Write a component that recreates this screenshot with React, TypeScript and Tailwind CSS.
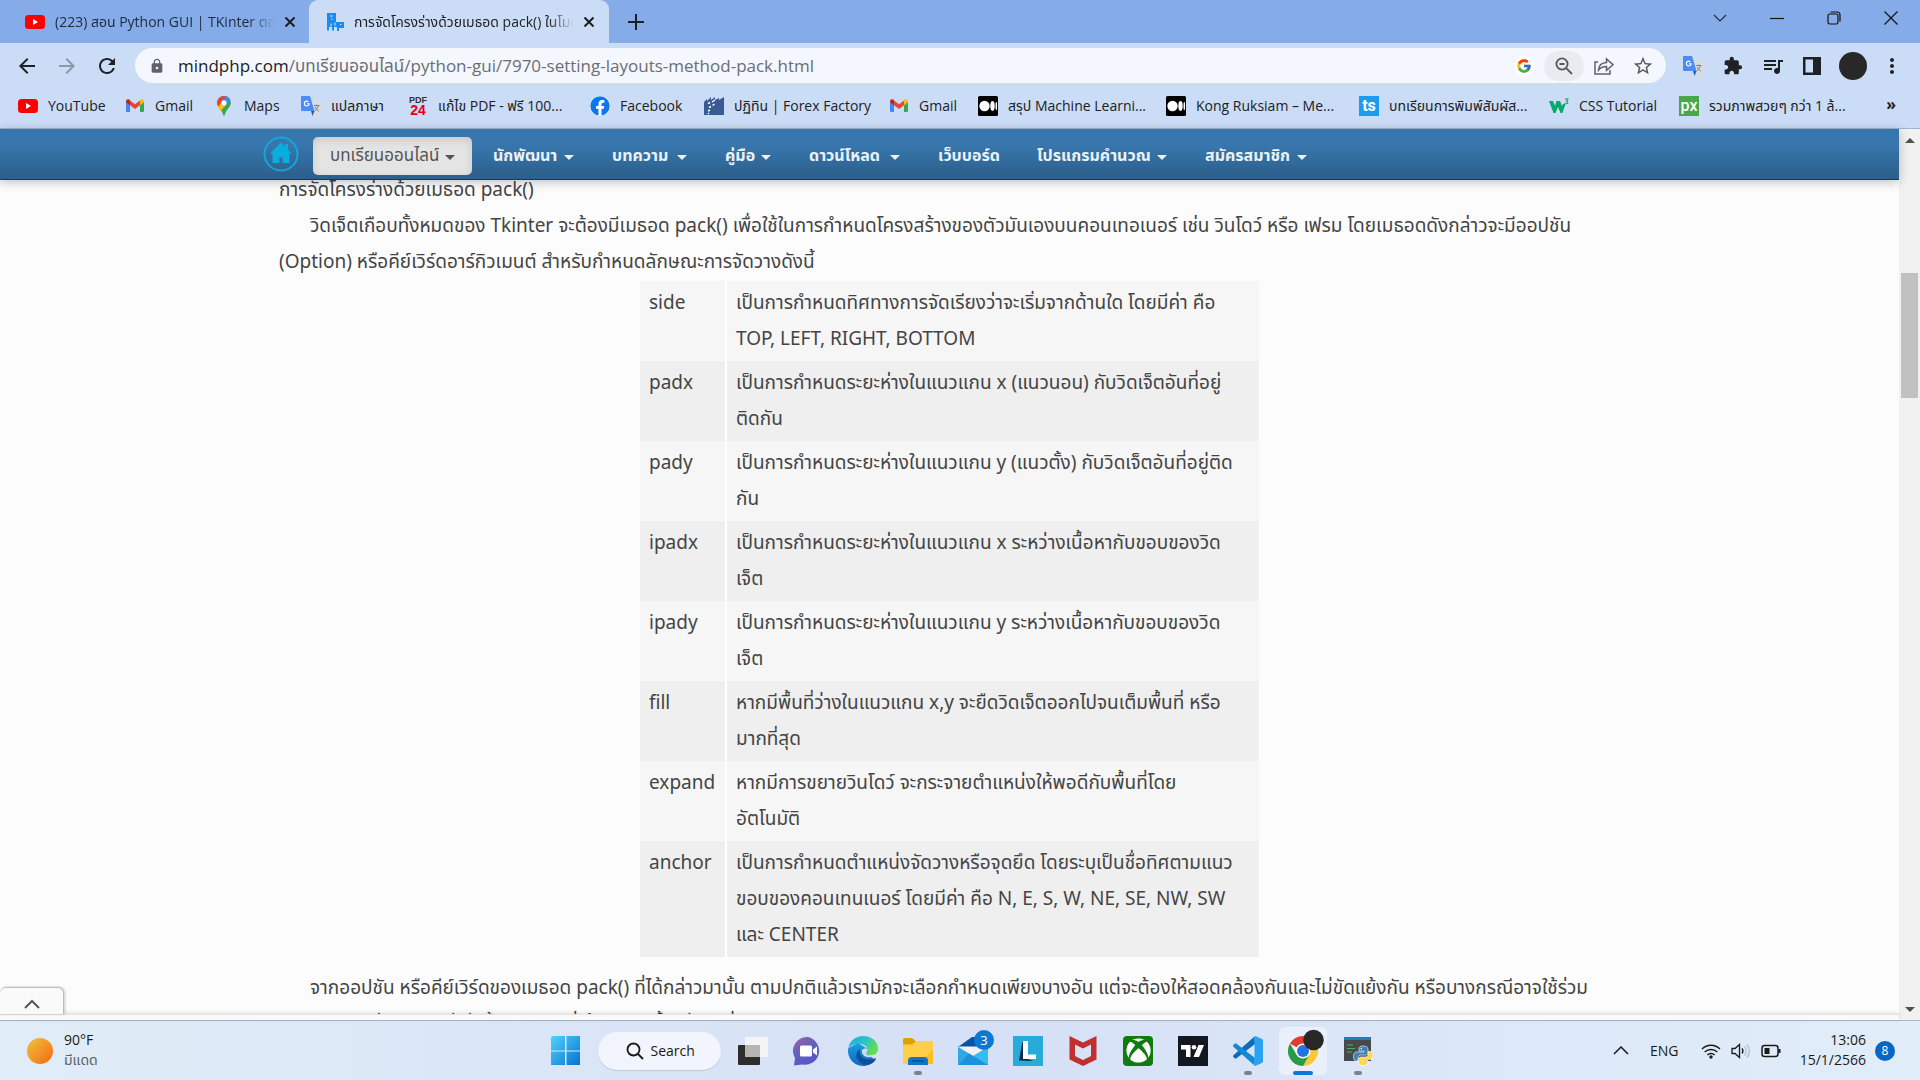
import type { ReactNode } from "react";
import {
  MdArrowBack,
  MdArrowForward,
  MdExtension,
  MdLock,
  MdMoreVert,
  MdQueueMusic,
  MdRefresh,
  MdStarBorder,
} from "react-icons/md";
import { FcGoogle } from "react-icons/fc";
import { FaFacebook, FaXbox } from "react-icons/fa";

const uiFont = "font-['Open_Sans','Noto_Sans_Thai','Loma',sans-serif]";
const pageFont = "font-['Noto_Sans','Noto_Sans_Thai','Loma',sans-serif]";

/* ---------- small brand icons ---------- */

function YouTubeIcon() {
  return (
    <svg viewBox="0 0 20 20" className="size-5 shrink-0">
      <rect x="0" y="3" width="20" height="14" rx="3.5" fill="#f00" />
      <path d="M8 7l5 3-5 3z" fill="#fff" />
    </svg>
  );
}

function GmailIcon() {
  return (
    <svg viewBox="0 0 20 20" className="size-5 shrink-0">
      <path d="M1 5.5v9.3c0 .8.5 1.2 1.2 1.2H5V8.8z" fill="#4285f4" />
      <path d="M19 5.5v9.3c0 .8-.5 1.2-1.2 1.2H15V8.8z" fill="#34a853" />
      <path d="M15 4.600v4.600l4-3v-.9c0-2-2-2.700-3.300-1.700z" fill="#fbbc04" />
      <path d="M1 5.300v.9l4 3V4.600L4.300 3.600C3 2.600 1 3.300 1 5.300z" fill="#c5221f" />
      <path d="M5 9.200V4.500l5 3.800 5-3.800v4.700l-5 3.800z" fill="#ea4335" />
    </svg>
  );
}

function MapsIcon() {
  return (
    <svg viewBox="0 0 20 20" className="size-5 shrink-0">
      <path d="M10 0C6 0 3.200 3 3.200 6.800c0 4.700 4.800 6.700 5.700 11.500.3 1.900 1.900 1.900 2.200 0 .9-4.800 5.700-6.800 5.700-11.500C16.800 3 14 0 10 0z" fill="#34a853" />
      <path d="M3.200 6.800C3.200 3 6 0 10 0c1 0 1.900.2 2.700.5L4.200 10.500c-.6-1.100-1-2.300-1-3.700z" fill="#ea4335" />
      <path d="M10 0c3 0 5.300 1.600 6.300 4l-4.200 4.900L7.800 5.100l4.100-4.900z" fill="#4285f4" />
      <path d="M4.200 10.500l3.600-4.300 4.400 2.600-5.500 6.300c-1-1.400-1.900-2.800-2.500-4.600z" fill="#fbbc04" />
      <circle cx="10" cy="6.800" r="2.600" fill="#fff" />
    </svg>
  );
}

function TranslateIcon() {
  return (
    <svg viewBox="0 0 20 20" className="size-5 shrink-0">
      <path d="M8 5h11c.6 0 1 .4 1 1v13c0 .6-.4 1-1 1h-7z" fill="#dadce0" />
      <path d="M1 0h8l4.500 15H1c-.6 0-1-.4-1-1V1c0-.6.4-1 1-1z" fill="#4c8bf5" />
      <path d="M10 15h3.500L11.500 20z" fill="#2a56c6" />
      <path d="M8.600 7.200H5.900v1.100h1.500c-.2.8-.8 1.200-1.600 1.200a1.900 1.900 0 010-3.800c.5 0 .9.200 1.200.5l.8-.8a2.900 2.900 0 00-2-.8 3 3 0 100 6c1.700 0 2.900-1.200 2.900-3z" fill="#fff" />
      <path d="M13 9.500h5.500M15.700 8.500v1M17.300 9.500c-.4 2.400-1.800 4.200-3.800 5.500M14.200 11c.8 1.900 2 3.200 3.800 4.300" stroke="#7a828c" strokeWidth="1" fill="none" />
    </svg>
  );
}

function Pdf24Icon() {
  return (
    <span className="flex h-5 w-5 shrink-0 flex-col items-center justify-center font-['Liberation_Sans',sans-serif] font-bold">
      <span className="text-[9px] leading-[9px] text-[#333]">PDF</span>
      <span className="text-[14px] leading-[11px] text-[#e2001a]">24</span>
    </span>
  );
}

function FacebookIcon() {
  return <FaFacebook className="size-5 shrink-0 rounded-full bg-white text-[#0b76f0]" />;
}

function ForexIcon() {
  return (
    <svg viewBox="0 0 20 20" className="size-5 shrink-0">
      <path d="M0 19V6l3-3v2l4-4v3l4-3v3l4-2v2l5-3v18z" fill="#3a5a94" />
      <path d="M4 7.500l2-1M8 6l3-2M5 11.500l2-1M8.500 9.500l2-1.500M4 15l2-1M4 18l1-1" stroke="#fff" strokeWidth="1.500" fill="none" />
    </svg>
  );
}

function MediumIcon() {
  return (
    <svg viewBox="0 0 20 20" className="size-5 shrink-0">
      <rect width="20" height="20" rx="1.500" fill="#000" />
      <ellipse cx="6.500" cy="10" rx="5.200" ry="5.200" fill="#fff" />
      <ellipse cx="14.500" cy="10" rx="2.200" ry="4.900" fill="#fff" />
      <ellipse cx="18.300" cy="10" rx=".8" ry="4.300" fill="#fff" />
    </svg>
  );
}

function TsIcon() {
  return (
    <span className="flex size-5 shrink-0 items-center justify-center bg-[#1d9bf0] font-['Roboto',sans-serif] text-base leading-5 font-bold text-white">
      ts
    </span>
  );
}

function PxIcon() {
  return (
    <span className="flex size-5 shrink-0 items-center justify-center bg-[#48a748] font-['Roboto',sans-serif] text-base leading-5 font-medium text-white">
      px
    </span>
  );
}

function W3Icon() {
  return (
    <svg viewBox="0 0 20 20" className="size-5 shrink-0">
      <path d="M0 5h4l2 5 1.500-5h3.500l2 5 1-2h2.500L13.500 17h-2L9 11l-2.500 6h-2z" fill="#04aa6d" />
      <path d="M16 3h3l-1.500 2c1.500 0 2 2.500-.2 2.800-.7 0-1.300-.3-1.600-.8" stroke="#04aa6d" strokeWidth="1.100" fill="none" />
    </svg>
  );
}

function MindphpIcon() {
  return (
    <svg viewBox="0 0 18 18" className="size-[18px] shrink-0">
      <path d="M1 0h9v9h8v6h-5v3h-2v-4H8v3.500H6V14H3v3.500H1z" fill="#1a8cf0" />
      <path d="M4 3h3M5 6h1.500M14 11.500h1.500M5 10.500v3M9 9.500v3" stroke="#cbdcf6" strokeWidth="1.100" />
    </svg>
  );
}

/* ---------- browser chrome ---------- */

function CloseX() {
  return (
    <svg viewBox="0 0 12 12" className="size-3" fill="none" stroke="#1c1f23" strokeWidth="2">
      <path d="M1.500 1.500l9 9M10.500 1.500l-9 9" />
    </svg>
  );
}

function TabStrip() {
  return (
    <div className="flex h-[43px] shrink-0 items-stretch bg-[#85ace9] text-[15px] text-[#1c2a40]">
      <div className="flex w-[309px] items-center pl-[25px]">
        <YouTubeIcon />
        <span className="ml-2.5 w-[220px] overflow-hidden [mask-image:linear-gradient(to_right,#000_88%,transparent)] text-sm leading-6 whitespace-nowrap">
          (223) สอน Python GUI | TKinter ตอนที่
        </span>
        <button aria-label="Close tab" className="ml-[9px]"><CloseX /></button>
      </div>
      <div className="flex w-[300px] items-center rounded-t-[9px] bg-[#cbdcf6] pl-[17px] text-[#1c1f23]">
        <MindphpIcon />
        <span className="ml-2.5 w-[220px] overflow-hidden [mask-image:linear-gradient(to_right,#000_88%,transparent)] text-sm leading-6 whitespace-nowrap">
          การจัดโครงร่างด้วยเมธอด pack() ในโมดูล
        </span>
        <button aria-label="Close tab" className="ml-[9px]"><CloseX /></button>
      </div>
      <button aria-label="New tab" className="ml-[19px]">
        <svg viewBox="0 0 16 16" className="size-4" stroke="#1c1f23" strokeWidth="2"><path d="M8 0v16M0 8h16" /></svg>
      </button>
      <div className="ml-auto flex h-9 items-center pr-px">
        <button aria-label="Search tabs" className="flex w-[57px] justify-center">
          <svg viewBox="0 0 14 8" className="w-3.5" fill="none" stroke="#1c2a40" strokeWidth="1.100"><path d="M1 1l6 6 6-6" /></svg>
        </button>
        <button aria-label="Minimize" className="flex w-[57px] justify-center">
          <svg viewBox="0 0 14 14" className="w-3.5" stroke="#111" strokeWidth="1.200"><path d="M0 7.500h14" /></svg>
        </button>
        <button aria-label="Restore" className="flex w-[57px] justify-center">
          <svg viewBox="0 0 14 14" className="w-3.5" fill="none" stroke="#111" strokeWidth="1.200">
            <rect x="1" y="3" width="10" height="10" rx="1.800" />
            <path d="M3.500 1h6.500a3 3 0 013 3v6.500" />
          </svg>
        </button>
        <button aria-label="Close" className="flex w-[57px] justify-center">
          <svg viewBox="0 0 14 14" className="w-3.5" fill="none" stroke="#111" strokeWidth="1.200"><path d="M.5.500l13 13M13.500.500l-13 13" /></svg>
        </button>
      </div>
    </div>
  );
}

function Toolbar() {
  return (
    <div className="flex h-[45px] shrink-0 items-center bg-[#cbdcf6] pr-4 text-[#202124]">
      <button aria-label="Back" className="ml-[15px]"><MdArrowBack className="size-6" /></button>
      <button aria-label="Forward" className="ml-4 text-[#8b96a9]"><MdArrowForward className="size-6" /></button>
      <button aria-label="Reload" className="ml-4"><MdRefresh className="size-6" /></button>
      <div className="ml-4 flex h-[35px] flex-1 items-center rounded-full bg-[#f4f7fd] pr-3 pl-3.5">
        <MdLock className="size-4 shrink-0 text-[#5f6368]" />
        <div className="relative ml-[13px] flex-1 text-[17px] leading-7">
          <input aria-label="Address" readOnly value="" className="absolute inset-0 w-full bg-transparent outline-none" />
          <span className="pointer-events-none whitespace-nowrap text-[#202124]">
            mindphp.com<span className="text-[#6a6e74]">/บทเรียนออนไลน์/python-gui/7970-setting-layouts-method-pack.html</span>
          </span>
        </div>
        <span className="flex size-5 items-center justify-center rounded-full bg-white"><FcGoogle className="size-4" /></span>
        <button aria-label="Zoom" className="ml-2.5 flex h-[30px] w-10 items-center justify-center rounded-full bg-[#e8ebf0]">
          <svg viewBox="0 0 18 18" className="size-[18px]" fill="none" stroke="#54585d" strokeWidth="1.800">
            <circle cx="7" cy="7" r="5.600" /><path d="M11.200 11.200l5.800 5.800M4.500 7h5" />
          </svg>
        </button>
        <button aria-label="Share" className="ml-2.5">
          <svg viewBox="0 0 20 18" className="h-[18px] w-5" fill="none" stroke="#5f6368" strokeWidth="1.500">
            <path d="M4 5H1v12h15v-4M4.500 13c.3-4.500 3-7.200 8-7.400V2l6.500 5.700-6.500 5.600V9.600c-3.500 0-6 1-8 3.400z" />
          </svg>
        </button>
        <button aria-label="Bookmark" className="ml-[18px]"><MdStarBorder className="size-[22px] text-[#54585d]" /></button>
      </div>
      <button aria-label="Google Translate" className="ml-[17px]"><TranslateIcon /></button>
      <button aria-label="Extensions" className="ml-5"><MdExtension className="size-5" /></button>
      <button aria-label="Media" className="ml-[18px]"><MdQueueMusic className="size-6" /></button>
      <button aria-label="Side panel" className="ml-[18px]">
        <svg viewBox="0 0 18 18" className="size-[18px]"><path d="M0 0h18v18H0zM2.500 2.500v13h7.500v-13z" fill="#202124" fillRule="evenodd" /></svg>
      </button>
      <button aria-label="Profile" className="ml-[18px] size-7 rounded-full bg-[#282828]" />
      <button aria-label="Menu" className="ml-[13px]"><MdMoreVert className="size-6" /></button>
    </div>
  );
}

const bookmarks: { label: string; icon: ReactNode; width: string }[] = [
  { label: "YouTube", icon: <YouTubeIcon />, width: "w-[107px]" },
  { label: "Gmail", icon: <GmailIcon />, width: "w-[89px]" },
  { label: "Maps", icon: <MapsIcon />, width: "w-[87px]" },
  { label: "แปลภาษา", icon: <TranslateIcon />, width: "w-[107px]" },
  { label: "แก้ไข PDF - ฟรี 100...", icon: <Pdf24Icon />, width: "w-[182px]" },
  { label: "Facebook", icon: <FacebookIcon />, width: "w-[114px]" },
  { label: "ปฏิทิน | Forex Factory", icon: <ForexIcon />, width: "w-[185px]" },
  { label: "Gmail", icon: <GmailIcon />, width: "w-[89px]" },
  { label: "สรุป Machine Learni...", icon: <MediumIcon />, width: "w-[188px]" },
  { label: "Kong Ruksiam – Me...", icon: <MediumIcon />, width: "w-[193px]" },
  { label: "บทเรียนการพิมพ์สัมผัส...", icon: <TsIcon />, width: "w-[190px]" },
  { label: "CSS Tutorial", icon: <W3Icon />, width: "w-[130px]" },
  { label: "รวมภาพสวยๆ กว่า 1 ล้...", icon: <PxIcon />, width: "w-[190px]" },
];

function BookmarksBar() {
  return (
    <nav aria-label="Bookmarks" className="flex h-[41px] shrink-0 items-center border-b border-[#9fb3d3] bg-[#cbdcf6] pb-1 pl-[18px] text-sm text-[#202124]">
      {bookmarks.map((b, i) => (
        <a key={i} href="#" className={`flex items-center gap-2.5 whitespace-nowrap ${b.width}`}>
          {b.icon}
          <span>{b.label}</span>
        </a>
      ))}
      <button aria-label="More bookmarks" className="mr-6 mb-1 ml-auto text-base leading-5 font-bold">»</button>
    </nav>
  );
}

/* ---------- web page ---------- */

const menu = [
  { label: "บทเรียนออนไลน์", caret: true, width: "w-[159px]" },
  { label: "นักพัฒนา", caret: true, width: "w-[115px]" },
  { label: "บทความ", caret: true, width: "w-[109px]" },
  { label: "คู่มือ", caret: true, width: "w-20" },
  { label: "ดาวน์โหลด", caret: true, width: "w-[125px]" },
  { label: "เว็บบอร์ด", caret: false, width: "w-[95px]" },
  { label: "โปรแกรมคำนวณ", caret: true, width: "w-[164px]" },
  { label: "สมัครสมาชิก", caret: true, width: "w-[136px]" },
];

function SiteNav() {
  return (
    <nav aria-label="Site" className="relative z-10 flex h-[51px] shrink-0 justify-center border-b border-[#16395c] bg-linear-to-b from-[#3877ae] from-30% to-[#2b5e8a] shadow-[0_2px_10px_rgba(0,0,0,0.25)]">
      <div className="flex w-full max-w-[1373px] items-center">
        <a href="#" aria-label="Home" className="flex size-9 items-center justify-center">
          <svg viewBox="0 0 36 36" className="size-9">
            <circle cx="18" cy="18" r="16.500" fill="none" stroke="#0fa9d8" strokeWidth="2" />
            <path d="M18 6.500L7 17.500h2.500V27h6v-6.500h5V27h6v-9.500H29l-4-4V8h-3v2.500z" fill="#0aaede" />
            <path d="M16 27v-6h4v6" fill="none" stroke="#0aaede" strokeWidth="1" />
          </svg>
        </a>
        <ul className="mt-1 ml-3.5 flex items-center gap-1">
          {menu.map((m, i) => (
            <li key={m.label}>
              <a
                href="#"
                className={`flex h-[38px] items-center justify-between px-[17px] pb-0.5 whitespace-nowrap ${m.width} ${
                  i === 0
                    ? "rounded-[5px] bg-[#e4e4e4] text-[17px] text-[#555] shadow-[inset_0_3px_8px_rgba(0,0,0,0.12)]"
                    : "text-base font-bold text-[#eaf2f9]"
                }`}
              >
                {m.label}
                {m.caret && <svg viewBox="0 0 10 5" className="mt-1 w-2.5 shrink-0" fill="currentColor"><path d="M0 0h10L5 5z" /></svg>}
              </a>
            </li>
          ))}
        </ul>
      </div>
    </nav>
  );
}

const options: [string, string[]][] = [
  ["side", ["เป็นการกำหนดทิศทางการจัดเรียงว่าจะเริ่มจากด้านใด โดยมีค่า คือ", "TOP, LEFT, RIGHT, BOTTOM"]],
  ["padx", ["เป็นการกำหนดระยะห่างในแนวแกน x (แนวนอน) กับวิดเจ็ตอันที่อยู่", "ติดกัน"]],
  ["pady", ["เป็นการกำหนดระยะห่างในแนวแกน y (แนวตั้ง) กับวิดเจ็ตอันที่อยู่ติด", "กัน"]],
  ["ipadx", ["เป็นการกำหนดระยะห่างในแนวแกน x ระหว่างเนื้อหากับขอบของวิด", "เจ็ต"]],
  ["ipady", ["เป็นการกำหนดระยะห่างในแนวแกน y ระหว่างเนื้อหากับขอบของวิด", "เจ็ต"]],
  ["fill", ["หากมีพื้นที่ว่างในแนวแกน x,y จะยืดวิดเจ็ตออกไปจนเต็มพื้นที่ หรือ", "มากที่สุด"]],
  ["expand", ["หากมีการขยายวินโดว์ จะกระจายตำแหน่งให้พอดีกับพื้นที่โดย", "อัตโนมัติ"]],
  ["anchor", ["เป็นการกำหนดตำแหน่งจัดวางหรือจุดยึด โดยระบุเป็นชื่อทิศตามแนว", "ขอบของคอนเทนเนอร์ โดยมีค่า คือ N, E, S, W, NE, SE, NW, SW", "และ CENTER"]],
];

function Lines({ lines }: { lines: string[] }) {
  return (
    <>
      {lines.map((l, i) => (
        <span key={i} className="block">{l}</span>
      ))}
    </>
  );
}

function Article() {
  return (
    <main className="min-h-0 flex-1 overflow-hidden">
      <div className="mx-auto -mt-[9px] max-w-[1341px] text-[19px] leading-9 whitespace-nowrap text-[#444]">
        <p>การจัดโครงร่างด้วยเมธอด pack()</p>
        <p className="indent-[31px]">วิดเจ็ตเกือบทั้งหมดของ Tkinter จะต้องมีเมธอด pack() เพื่อใช้ในการกำหนดโครงสร้างของตัวมันเองบนคอนเทอเนอร์ เช่น วินโดว์ หรือ เฟรม โดยเมธอดดังกล่าวจะมีออปชัน</p>
        <p>(Option) หรือคีย์เวิร์ดอาร์กิวเมนต์ สำหรับกำหนดลักษณะการจัดวางดังนี้</p>
        <table className="mx-auto mt-0.5 mb-3 w-[619px] table-fixed">
          <colgroup><col className="w-[86px]" /><col /></colgroup>
          <tbody>
            {options.map(([name, lines], i) => (
              <tr key={name} className={i % 2 ? "bg-[#efefef]" : "bg-[#f6f6f6]"}>
                <th scope="row" className="border-r-2 border-white px-[9px] pt-[3px] pb-[5px] text-left align-top font-normal">{name}</th>
                <td className="px-[9px] pt-[3px] pb-[5px] align-top"><Lines lines={lines} /></td>
              </tr>
            ))}
          </tbody>
        </table>
        <p className="indent-[31px]">จากออปชัน หรือคีย์เวิร์ดของเมธอด pack() ที่ได้กล่าวมานั้น ตามปกติแล้วเรามักจะเลือกกำหนดเพียงบางอัน แต่จะต้องให้สอดคล้องกันและไม่ขัดแย้งกัน หรือบางกรณีอาจใช้ร่วม</p>
        <p>กันโดยเป็นอย่างตัวละไม่เท่านั้น ผลลัพธ์ที่ได้อาจเกิดขึ้นไม่ตรงที่คาดหวัง</p>
      </div>
    </main>
  );
}

function Scrollbar() {
  return (
    <div className="flex w-[21px] shrink-0 flex-col items-center bg-[#f1f1f1] pt-[9px] pb-2">
      <svg viewBox="0 0 10 5" className="w-2.5 fill-[#505050]"><path d="M0 5h10L5 0z" /></svg>
      <div className="mt-[130px] h-[125px] w-[17px] bg-[#c1c1c1]" />
      <svg viewBox="0 0 10 5" className="mt-auto w-2.5 fill-[#505050]"><path d="M0 0h10L5 5z" /></svg>
    </div>
  );
}

function WebPage() {
  return (
    <div className="flex min-h-0 flex-1">
      <div className={`relative flex min-w-0 flex-1 flex-col bg-[#fcfcfc] ${pageFont}`}>
        <SiteNav />
        <Article />
        <div className="h-1.5 shrink-0 border-t border-[#e2e2e2] bg-[#fafafa] shadow-[0_-1px_4px_rgba(0,0,0,0.12)]" />
        <button aria-label="Back to top" className="absolute bottom-1.5 left-0 flex h-[27px] w-16 items-center justify-center rounded-t-md border-t border-r border-[#bbb] bg-[#fafafa] pt-1.5 shadow-[1px_0_3px_rgba(0,0,0,0.2)]">
          <svg viewBox="0 0 16 10" className="w-4" fill="none" stroke="#555" strokeWidth="2"><path d="M1 9l7-7 7 7" /></svg>
        </button>
      </div>
      <Scrollbar />
    </div>
  );
}

/* ---------- taskbar ---------- */

function WindowsIcon() {
  return (
    <svg viewBox="0 0 30 30" className="size-[30px]">
      <defs><linearGradient id="win" x1="0" y1="0" x2="1" y2="1"><stop offset="0" stopColor="#4fd3ff" /><stop offset="1" stopColor="#0673d0" /></linearGradient></defs>
      <path d="M1.500 0H14v14.500H0v-13zM15.500 0H29v14.500H15.500zM0 15.500h14V29H0zM15.500 15.500H29V29H15.500z" fill="url(#win)" />
    </svg>
  );
}

function TaskViewIcon() {
  return (
    <svg viewBox="0 0 30 30" className="size-[30px]">
      <rect x="0" y="9" width="22" height="20" rx="1" fill="#2d2d2d" />
      <rect x="7" y="1" width="23" height="20" rx="1" fill="#f4f4f4" />
      <rect x="7" y="9" width="15" height="12" fill="#b5b5b5" />
    </svg>
  );
}

function ChatIcon() {
  return (
    <svg viewBox="0 0 30 30" className="size-[30px]">
      <defs>
        <linearGradient id="chat" x1="0" y1="0" x2=".6" y2="1"><stop offset="0" stopColor="#a0609f" /><stop offset=".5" stopColor="#6560bd" /><stop offset="1" stopColor="#5058c8" /></linearGradient>
      </defs>
      <path d="M15 1a14 14 0 11-6 27.500L1 29.500l1-7.500A14 14 0 0115 1z" fill="url(#chat)" />
      <rect x="7" y="9.500" width="12" height="11" rx="1.500" fill="#fff" />
      <path d="M20 13.500l4-3v9l-4-3z" fill="#fff" />
    </svg>
  );
}

function EdgeIcon() {
  return (
    <svg viewBox="0 0 30 30" className="size-[30px]">
      <defs>
        <linearGradient id="edgeTop" x1="0" y1="0" x2="1" y2=".5"><stop offset="0" stopColor="#20a8e0" /><stop offset=".55" stopColor="#2cc3c9" /><stop offset="1" stopColor="#67dd4a" /></linearGradient>
        <linearGradient id="edgeLow" x1="0" y1="0" x2="0" y2="1"><stop offset="0" stopColor="#1b9de2" /><stop offset="1" stopColor="#1068c4" /></linearGradient>
      </defs>
      <path d="M.3 12A15 15 0 0015 30c5 0 9.500-2.500 12.500-6L18 17.500l1-5L10 7z" fill="url(#edgeLow)" />
      <path d="M.3 12C1.500 5 7.500 0 15 0c9 0 15 6 15 12.500 0 4.500-3.500 7-7.500 7-3 0-4.500-1-4.500-2s1.300-1.500 1.300-4c0-3-3.300-5.500-7.800-5.500C6 8 1.500 10 .3 12z" fill="url(#edgeTop)" />
      <path d="M12 13c-3 2-5 6-2.500 10.500 3 5 9 6.500 13 4.500 2-1 4-2.500 5.200-4.600.4-.8-.3-1.300-1-.9-5.500 2.800-13.700 0-14.900-5-.3-1.700-.2-3.200.2-4.500z" fill="#0e4f97" />
      <path d="M14 14c1.500-2 5.300-2 5.300-.5 0 2.500-1.300 3-1.300 4s1.500 2 4.500 2c1.500 0 3-.3 4-.9-3 4.400-13.500 3.400-12.500-4.600z" fill="#d5def4" />
    </svg>
  );
}

function FolderIcon() {
  return (
    <svg viewBox="0 0 30 30" className="size-[30px]">
      <path d="M0 4c0-1 .7-2 2-2h7l4 3.500V9H0z" fill="#e0a000" />
      <path d="M0 8.500h9.500L13 5h15.500c1 0 1.500.7 1.500 1.500V28H1.500C.6 28 0 27.500 0 26.500z" fill="#ffcf48" />
      <path d="M30 14v14H15z" fill="#fbbd22" />
      <path d="M5 29v-4.500C5 22.500 6.500 21 8.500 21h13c2 0 3.500 1.500 3.500 3.500V29z" fill="#1075c8" />
      <path d="M9 25h12" stroke="#064a86" strokeWidth="1.300" />
    </svg>
  );
}

function MailIcon() {
  return (
    <span className="relative">
      <svg viewBox="0 0 30 30" className="size-[30px]">
        <path d="M0 11L14 1h4l12 10z" fill="#0a54a8" />
        <path d="M1 10.500h28L18 19h-5z" fill="#f1f1f4" />
        <path d="M0 11l15 9v9H0z" fill="#2ea9e6" />
        <path d="M30 11v18H15v-9z" fill="#35bdf0" />
        <path d="M0 29l11-11.500L30 29z" fill="#1e90dc" />
      </svg>
      <span className="absolute -top-1.5 -right-1.5 flex size-5 items-center justify-center rounded-full bg-[#0a78d4] text-[13px] leading-5 text-white">3</span>
    </span>
  );
}

function LIcon() {
  return (
    <svg viewBox="0 0 30 30" className="size-[30px]">
      <path d="M0 0h30v30H0z" fill="#27acd9" />
      <path d="M9.500 5L6 24.500 20 25l-8-3z" fill="#12284c" />
      <path d="M10 5h5v13.500h8V23H10z" fill="#fff" />
    </svg>
  );
}

function ShieldIcon() {
  return (
    <svg viewBox="0 0 30 30" className="size-[30px]">
      <path d="M1.500 0L15 6.500 28.500 0v23.500L15 30 1.500 23.500zM7 8.500v11.500l8 4 8-4V8.500l-8 4z" fill="#c0302f" fillRule="evenodd" />
    </svg>
  );
}

function XboxIcon() {
  return (
    <span className="flex size-[30px] items-center justify-center rounded-sm bg-[#107c10]">
      <FaXbox className="size-[25px] text-white" />
    </span>
  );
}

function TradingViewIcon() {
  return (
    <svg viewBox="0 0 30 30" className="size-[30px]">
      <path d="M0 0h30v30H0z" fill="#131722" />
      <path d="M3 9h9.500v12H8v-7.500H3zM20.500 9H26l-5 12h-5.500z" fill="#fff" />
      <circle cx="16" cy="11.200" r="2.300" fill="#fff" />
    </svg>
  );
}

function VSCodeIcon() {
  return (
    <svg viewBox="0 0 30 30" className="size-[30px]">
      <path d="M22 8L3.500 22.300c-.6.500-1.300.4-1.800 0L.4 21c-.6-.5-.5-1.300 0-1.800L21.500.5z" fill="#0b6db8" />
      <path d="M22 22L3.500 7.700c-.6-.5-1.300-.4-1.800 0L.4 9c-.6.500-.5 1.300 0 1.800L21.500 29.500z" fill="#1389d3" />
      <path d="M21.500 29.800V.2c.4-.3 1-.2 1.400 0l6 2.900c.7.300 1.100.9 1.100 1.600v20.600c0 .7-.4 1.300-1.100 1.600l-6 2.900c-.4.200-1 .3-1.400 0z" fill="#2aa3f2" />
    </svg>
  );
}

function ChromeIcon() {
  return (
    <span className="flex size-12 items-center justify-center rounded-md bg-[#eaf0fb]">
      <svg viewBox="0 0 36 36" className="size-9 overflow-visible">
        <path d="M18 18L5 10.500A15 15 0 0131 10.500z" fill="#e33b2e" />
        <path d="M18 10.500h13a15 15 0 01-13 22.500l6.500-11.200z" fill="#fcc934" />
        <path d="M11.500 21.800L5 10.500A15 15 0 0018 33l6.500-11.300z" fill="#2a9a48" />
        <circle cx="18" cy="18" r="7.500" fill="#fff" />
        <circle cx="18" cy="18" r="6" fill="#2374e1" />
        <circle cx="28.500" cy="7" r="10.300" fill="#282828" />
      </svg>
    </span>
  );
}

function PythonTerminalIcon() {
  return (
    <svg viewBox="0 0 30 30" className="size-[30px]">
      <rect x="1" y="1" width="27" height="24" fill="#454a4e" />
      <path d="M1 1h27v3H1z" fill="#1c7dc2" />
      <path d="M4 9h6M4 12.500h8M4 16h5" stroke="#4caf50" strokeWidth="1" />
      <path d="M20 10c-3 0-4 1-4 3v2h5v1h-7.500c-2 0-3 1.500-3 4.500s1 4.500 3 4.500H15v-3c0-2 1.500-3 3-3h4.500c1.500 0 2.500-1 2.500-2.500V13c0-2-2-3-5-3z" fill="#3f7fb5" stroke="#fff" strokeWidth=".6" />
      <path d="M20 29.500c3.500 0 5-1 5-3v-2h-5v-1h6.500c2 0 3.500-1.500 3.500-4s-1-4-3-4H25v3c0 1.500-1 2.500-2.500 2.500H18c-1.500 0-2.500 1-2.500 2.500v3c0 2 1.500 3 4.500 3z" fill="#ffd94d" stroke="#fff" strokeWidth=".6" />
      <circle cx="18.300" cy="12.500" r=".8" fill="#fff" />
    </svg>
  );
}

const apps: { label: string; icon: ReactNode; mark?: "open" | "active" }[] = [
  { label: "Task view", icon: <TaskViewIcon /> },
  { label: "Chat", icon: <ChatIcon /> },
  { label: "Edge", icon: <EdgeIcon /> },
  { label: "File Explorer", icon: <FolderIcon />, mark: "open" },
  { label: "Mail", icon: <MailIcon /> },
  { label: "L app", icon: <LIcon /> },
  { label: "Security", icon: <ShieldIcon /> },
  { label: "Xbox", icon: <XboxIcon /> },
  { label: "TradingView", icon: <TradingViewIcon /> },
  { label: "Visual Studio Code", icon: <VSCodeIcon />, mark: "open" },
  { label: "Chrome", icon: <ChromeIcon />, mark: "active" },
  { label: "Python", icon: <PythonTerminalIcon />, mark: "open" },
];

function Taskbar() {
  return (
    <footer className="flex h-[60px] shrink-0 items-center border-t border-[#a9b6c8] bg-linear-to-r from-[#e0edf7] via-[#d6e0f6] via-50% to-[#e1edf9] text-[15px] text-[#1a1a1a]">
      <div className="flex flex-1 items-center pl-[27px]">
        <span className="size-[26px] rounded-full bg-linear-to-br from-[#eec13c] to-[#f2660d]" />
        <div className="ml-[11px] pb-0.5 text-sm leading-5">
          <div>90°F</div>
          <div className="text-[#5b6169]">มีแดด</div>
        </div>
      </div>
      <div className="flex items-center pl-3.5">
        <button aria-label="Start"><WindowsIcon /></button>
        <button className="ml-[17px] flex h-[38px] w-[123px] items-center gap-[7px] rounded-full bg-[#f2f5fd] pl-7 shadow-[0_1px_1px_rgba(0,0,0,0.12)]">
          <svg viewBox="0 0 18 18" className="size-[18px]" fill="none" stroke="#1a1a1a" strokeWidth="1.800"><circle cx="7.500" cy="7.500" r="6" /><path d="M12 12l5 5" /></svg>
          <span className="text-sm">Search</span>
        </button>
        <div className="ml-[5px] flex">
          {apps.map((a) => (
            <button key={a.label} aria-label={a.label} className="relative flex h-[59px] w-[55px] items-center justify-center">
              {a.icon}
              {a.mark === "open" && <span className="absolute bottom-[5px] h-1 w-2 rounded-full bg-[#7d828c]" />}
              {a.mark === "active" && <span className="absolute bottom-[5px] h-1 w-5 rounded-full bg-[#0a78d4]" />}
            </button>
          ))}
        </div>
      </div>
      <div className="flex flex-1 items-center justify-end pr-[25px]">
        <svg viewBox="0 0 16 9" className="w-4" fill="none" stroke="#1a1a1a" strokeWidth="1.500"><path d="M1 8l7-7 7 7" /></svg>
        <span className="ml-[21px] w-[51px] text-sm">ENG</span>
        <svg viewBox="0 0 20 16" className="w-5" fill="none" stroke="#1a1a1a" strokeWidth="1.400">
          <path d="M1 6a12.700 12.700 0 0118 0M3.700 9a9 9 0 0112.600 0M6.400 12a5 5 0 017.200 0" /><circle cx="10" cy="14" r="1" fill="#1a1a1a" />
        </svg>
        <svg viewBox="0 0 20 16" className="ml-2.5 w-5" fill="none" stroke="#1a1a1a" strokeWidth="1.300">
          <path d="M1 5.500h3L8.500 1.500v13L4 10.500H1zM11 5.500a4 4 0 010 5" /><path d="M13.500 3.500a7 7 0 010 9M16 1.500a10 10 0 010 13" stroke="#b4bcc6" />
        </svg>
        <svg viewBox="0 0 20 14" className="ml-2.5 w-5" fill="none" stroke="#1a1a1a" strokeWidth="1.500">
          <rect x="1" y="1.500" width="16" height="11" rx="2.500" /><path d="M3.500 4h5v6h-5z" fill="#1a1a1a" stroke="none" /><path d="M18.500 5v4" strokeWidth="2" />
        </svg>
        <div className="w-[85px] pb-0.5 text-right text-sm leading-5">
          <div>13:06</div>
          <div>15/1/2566</div>
        </div>
        <span className="ml-[9px] flex size-5 items-center justify-center rounded-full bg-[#0866c6] text-xs text-white">8</span>
      </div>
    </footer>
  );
}

export default function App() {
  return (
    <div className={`flex h-screen flex-col overflow-hidden ${uiFont}`}>
      <TabStrip />
      <Toolbar />
      <BookmarksBar />
      <WebPage />
      <Taskbar />
    </div>
  );
}
